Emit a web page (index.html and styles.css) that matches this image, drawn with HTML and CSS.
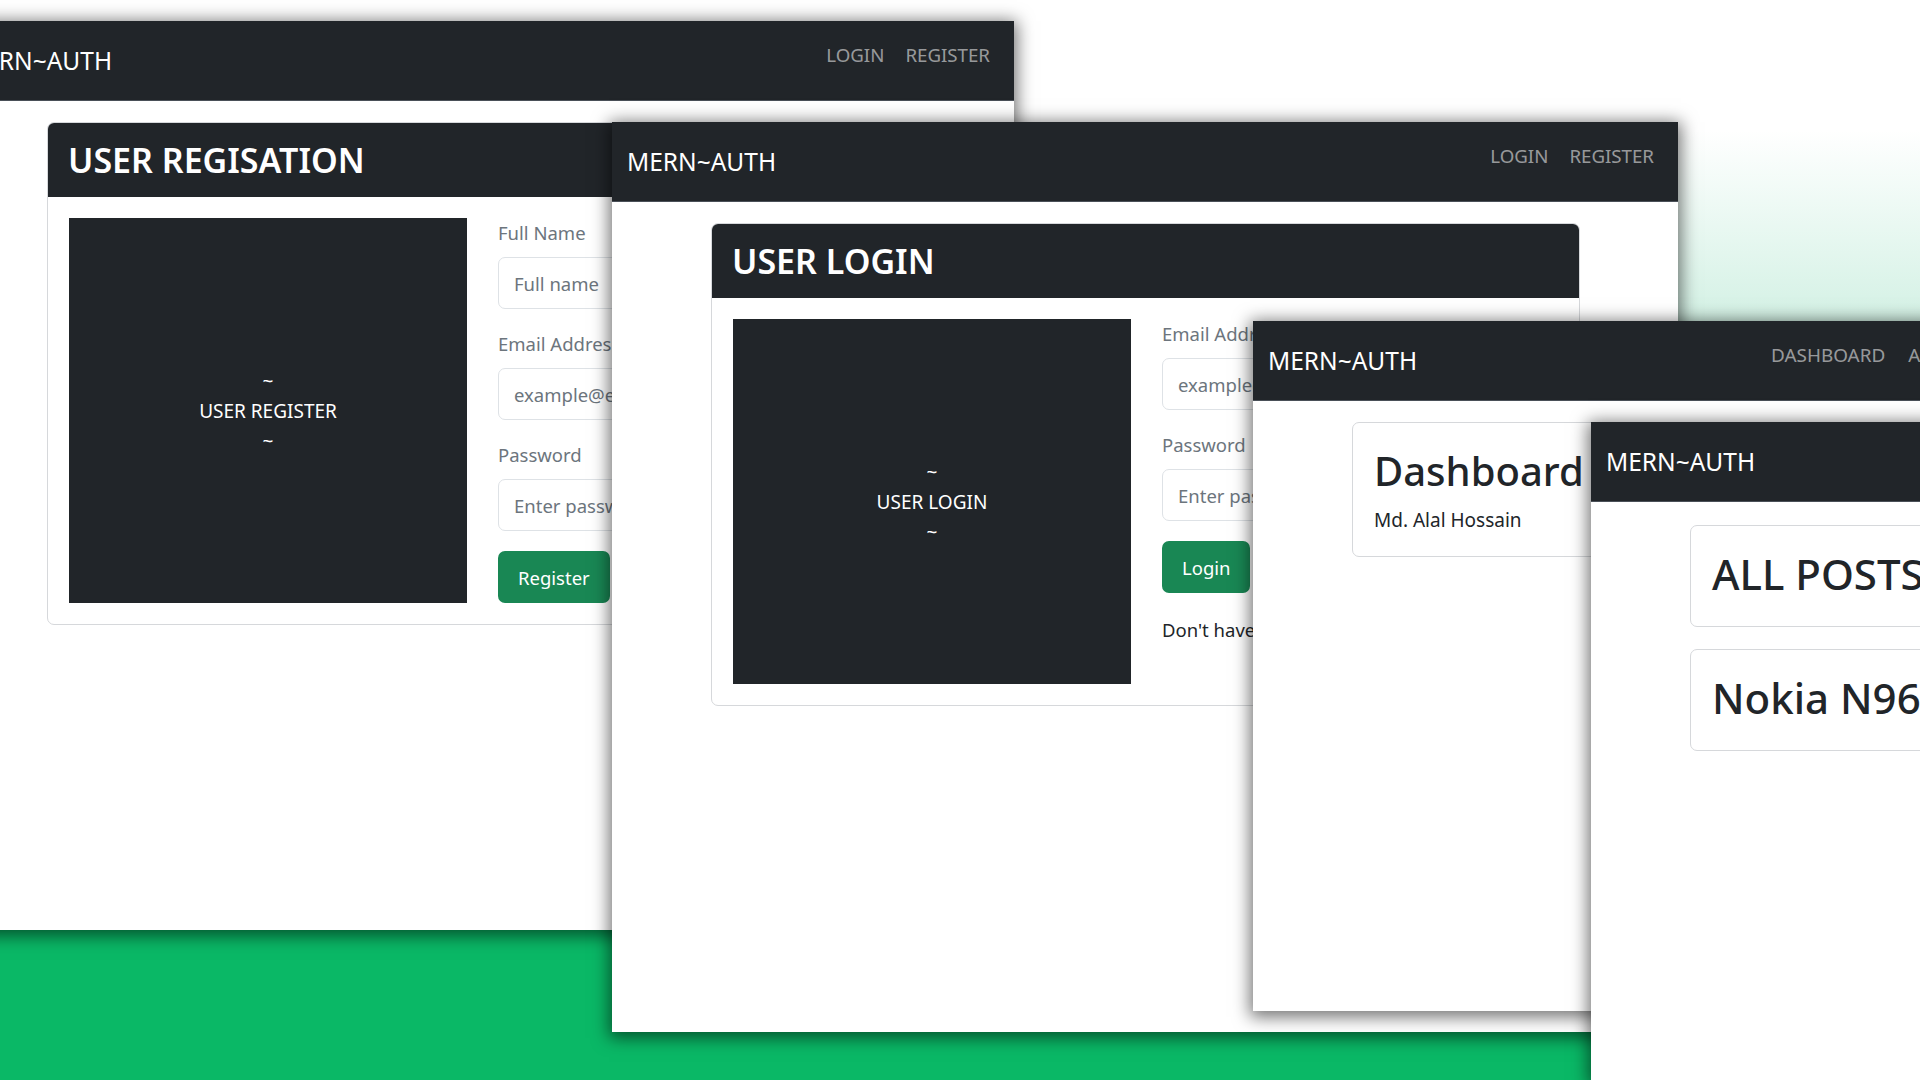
FILE: index.html
```html
<!DOCTYPE html>
<html lang="en">
<head>
<meta charset="utf-8">
<title>MERN~AUTH screenshots</title>
<link rel="stylesheet" href="styles.css">
</head>
<body>
<div class="desktop">

  <section class="win win-register">
    <nav class="navbar">
      <span class="brand">MERN~AUTH</span>
      <ul class="nav-links">
        <li>LOGIN</li>
        <li>REGISTER</li>
      </ul>
    </nav>
    <main class="container">
      <div class="card">
        <div class="card-header">USER REGISATION</div>
        <div class="card-body split">
          <div class="hero">
            <span>~</span>
            <span>USER REGISTER</span>
            <span>~</span>
          </div>
          <form class="form">
            <label class="label">Full Name</label>
            <div class="input">Full name</div>
            <label class="label">Email Address</label>
            <div class="input">example@email.com</div>
            <label class="label">Password</label>
            <div class="input">Enter password</div>
            <div class="btn">Register</div>
          </form>
        </div>
      </div>
    </main>
  </section>

  <section class="win win-login">
    <nav class="navbar">
      <span class="brand">MERN~AUTH</span>
      <ul class="nav-links">
        <li>LOGIN</li>
        <li>REGISTER</li>
      </ul>
    </nav>
    <main class="container">
      <div class="card">
        <div class="card-header">USER LOGIN</div>
        <div class="card-body split">
          <div class="hero">
            <span>~</span>
            <span>USER LOGIN</span>
            <span>~</span>
          </div>
          <form class="form">
            <label class="label">Email Address</label>
            <div class="input">example@email.com</div>
            <label class="label">Password</label>
            <div class="input">Enter password</div>
            <div class="btn">Login</div>
            <p class="note">Don't have an account? Register</p>
          </form>
        </div>
      </div>
    </main>
  </section>

  <section class="win win-dashboard">
    <nav class="navbar">
      <span class="brand">MERN~AUTH</span>
      <ul class="nav-links">
        <li>DASHBOARD</li>
        <li>ALL POSTS</li>
        <li>LOGOUT</li>
      </ul>
    </nav>
    <main class="container">
      <div class="card plain">
        <h1 class="display">Dashboard</h1>
        <p class="user">Md. Alal Hossain</p>
      </div>
    </main>
  </section>

  <section class="win win-posts">
    <nav class="navbar">
      <span class="brand">MERN~AUTH</span>
      <ul class="nav-links">
        <li>DASHBOARD</li>
        <li>ALL POSTS</li>
        <li>LOGOUT</li>
      </ul>
    </nav>
    <main class="container stack">
      <div class="card plain post">
        <h1 class="display big">ALL POSTS</h1>
      </div>
      <div class="card plain post">
        <h1 class="display big">Nokia N96</h1>
      </div>
    </main>
  </section>

</div>
</body>
</html>
```

FILE: styles.css
```css
* { box-sizing: border-box; }

html, body {
  margin: 0;
  padding: 0;
}

body {
  width: 1920px;
  height: 1080px;
  overflow: hidden;
  font-family: "Noto Sans", "Open Sans", sans-serif;
  color: #212529;
  background: linear-gradient(180deg, #ffffff 0, #ffffff 130px, #d6f2e6 310px, #0ab866 930px, #0ab866 100%);
}

.desktop {
  position: relative;
  width: 1920px;
  height: 1080px;
  overflow: hidden;
}

.win {
  position: absolute;
  width: 1066px;
  background: #ffffff;
  box-shadow: 0 3px 16px 3px rgba(0, 0, 0, 0.55);
  overflow: hidden;
}

.win-register { left: -52px; top: 21px; height: 909px; }
.win-login { left: 612px; top: 122px; height: 910px; }
.win-dashboard { left: 1253px; top: 321px; height: 690px; }
.win-posts { left: 1591px; top: 422px; height: 658px; }

.navbar {
  height: 80px;
  background: #212529;
  border-bottom: 1px solid #4a5058;
  display: flex;
  align-items: center;
  padding: 0 24px 0 15px;
}

.brand {
  color: #ffffff;
  font-size: 24.5px;
  line-height: 32px;
  white-space: nowrap;
}

.nav-links {
  list-style: none;
  align-self: flex-start;
  margin: 21px 0 0 auto;
  padding: 0;
  display: flex;
  gap: 21px;
  color: rgba(255, 255, 255, 0.55);
  font-size: 18.7px;
  line-height: 26px;
  white-space: nowrap;
}

.win-dashboard .nav-links,
.win-posts .nav-links {
  margin-left: 354px;
  gap: 23px;
  font-size: 18.9px;
}

.container {
  width: 869px;
  margin-left: 99px;
  padding-top: 21px;
}

.stack {
  display: flex;
  flex-direction: column;
  gap: 22px;
  padding-top: 23px;
}

.card {
  border: 1px solid #d6d8db;
  border-radius: 7px;
  background: #ffffff;
  overflow: hidden;
}

.card-header {
  height: 74px;
  background: #212529;
  color: #ffffff;
  font-size: 34px;
  font-weight: 600;
  display: flex;
  align-items: center;
  padding: 0 20px;
}

.card-body {
  padding: 21px;
}

.split {
  display: grid;
  grid-template-columns: 398px 398px;
  column-gap: 31px;
}

.hero {
  background: #212529;
  color: #ffffff;
  font-size: 19px;
  line-height: 30px;
  display: flex;
  flex-direction: column;
  align-items: center;
  justify-content: center;
}

.form {
  display: flex;
  flex-direction: column;
  align-items: flex-start;
}

.label {
  color: #6c757d;
  font-size: 18.5px;
  line-height: 29px;
  margin-bottom: 10px;
  white-space: nowrap;
}

.input {
  width: 100%;
  height: 52px;
  border: 1px solid #dee2e6;
  border-radius: 7px;
  padding: 0 15px;
  display: flex;
  align-items: center;
  color: #6c757d;
  font-size: 18.5px;
  margin-bottom: 20px;
  white-space: nowrap;
  overflow: hidden;
}

.btn {
  height: 52px;
  background: #198754;
  color: #ffffff;
  border-radius: 7px;
  padding: 0 20px;
  display: flex;
  align-items: center;
  font-size: 18.5px;
}

.note {
  margin: 22px 0 40px;
  font-size: 18.5px;
  line-height: 29px;
  white-space: nowrap;
}

.plain {
  padding: 21px;
}

.display {
  margin: 0 0 8px;
  font-size: 40px;
  font-weight: 500;
  line-height: 54px;
  white-space: nowrap;
}

.user {
  margin: 0;
  font-size: 19px;
  line-height: 29px;
  white-space: nowrap;
}

.post {
  height: 102px;
  padding: 18px 21px;
}

.big {
  font-size: 42px;
  line-height: 60px;
  margin: 0;
}
```
